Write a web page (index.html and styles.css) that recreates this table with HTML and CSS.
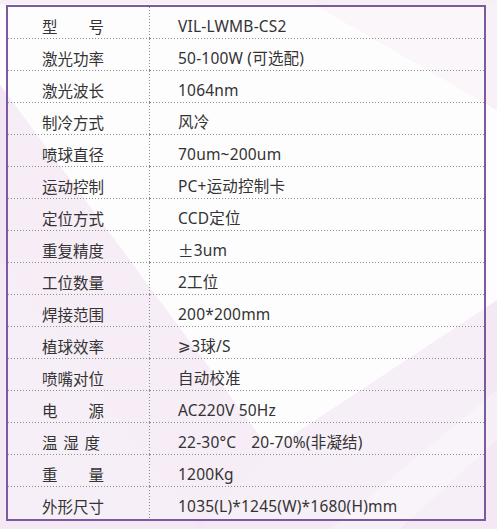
FILE: index.html
```html
<!DOCTYPE html>
<html lang="zh-CN">
<head>
<meta charset="utf-8">
<title>技术参数</title>
<link rel="stylesheet" href="styles.css">
</head>
<body>
<div class="page">
  <svg class="bg" width="497" height="529" viewBox="0 0 497 529" aria-hidden="true">
    <rect width="497" height="529" fill="#f4e8f4"/>
    <polygon points="0,0 307,0 497,110 497,300 270,450 0,85" fill="#fefcfe"/>
    <polygon points="307,0 497,0 497,110" fill="#f8f2f8"/>
    <polygon points="0,85 270,450 200,529 0,260" fill="#f3e5f3"/>
    <polygon points="330,529 497,390 497,440 400,529" fill="#f7eff7"/>
    <rect x="0" y="0" width="497" height="4" fill="#f6eff6"/>
  </svg>
  <div class="spec">
    <div class="k"><span class="just w4"><span>型</span><span>号</span></span></div><div class="v">VIL-LWMB-CS2</div>
    <div class="k">激光功率</div><div class="v">50-100W (可选配)</div>
    <div class="k">激光波长</div><div class="v">1064nm</div>
    <div class="k">制冷方式</div><div class="v">风冷</div>
    <div class="k">喷球直径</div><div class="v">70um~200um</div>
    <div class="k">运动控制</div><div class="v">PC+运动控制卡</div>
    <div class="k">定位方式</div><div class="v">CCD定位</div>
    <div class="k">重复精度</div><div class="v"><span class="cjk">±</span>3um</div>
    <div class="k">工位数量</div><div class="v">2工位</div>
    <div class="k">焊接范围</div><div class="v">200*200mm</div>
    <div class="k">植球效率</div><div class="v"><span class="ge">⩾</span>3球/S</div>
    <div class="k">喷嘴对位</div><div class="v">自动校准</div>
    <div class="k"><span class="just w4"><span>电</span><span>源</span></span></div><div class="v">AC220V 50Hz</div>
    <div class="k"><span class="just w3"><span>温</span><span>湿</span><span>度</span></span></div><div class="v">22-30°C<span class="gap"></span>20-70%(非凝结)</div>
    <div class="k"><span class="just w4"><span>重</span><span>量</span></span></div><div class="v">1200Kg</div>
    <div class="k last">外形尺寸</div><div class="v last">1035(L)*1245(W)*1680(H)mm</div>
  </div>
</div>
</body>
</html>
```

FILE: styles.css
```css
html, body {
  margin: 0;
  padding: 0;
}

body {
  width: 497px;
  height: 529px;
  overflow: hidden;
  font-family: "Noto Sans CJK SC", "Noto Sans", sans-serif;
  color: #333333;
}

.page {
  display: grid;
  width: 497px;
  height: 529px;
}

.bg {
  grid-area: 1 / 1;
  display: block;
}

.spec {
  grid-area: 1 / 1;
  align-self: start;
  margin: 5px 0 0 6px;
  width: 480px;
  box-sizing: border-box;
  border: 2px solid #7b5a9f;
  background: rgba(255, 255, 255, 0.3);
  display: grid;
  grid-template-columns: 142px 1fr;
  grid-auto-rows: 32px;
  font-size: 15.5px;
}

.k,
.v {
  display: flex;
  align-items: center;
  box-sizing: border-box;
  padding-top: 6px;
  line-height: 20px;
  white-space: nowrap;
  background-image: linear-gradient(to right, #8c8c8c 1px, transparent 1px);
  background-size: 3px 1px;
  background-repeat: repeat-x;
  background-position: left bottom;
}

.k {
  padding-left: 34px;
  background-image:
    linear-gradient(to right, #8c8c8c 1px, transparent 1px),
    linear-gradient(to bottom, #8c8c8c 1px, transparent 1px);
  background-size: 3px 1px, 1px 3px;
  background-repeat: repeat-x, repeat-y;
  background-position: left bottom, right top;
}

.v {
  padding-left: 28px;
  font-family: "Noto Sans", "Noto Sans CJK SC", sans-serif;
  letter-spacing: 0.2px;
  white-space: pre;
}

.k.last {
  background-image: linear-gradient(to bottom, #8c8c8c 1px, transparent 1px);
  background-size: 1px 3px;
  background-repeat: repeat-y;
  background-position: right top;
}

.v.last {
  background-image: none;
}

.just {
  display: flex;
  justify-content: space-between;
}

.w4 {
  width: 62px;
}

.w3 {
  width: 58px;
}

.gap {
  display: inline-block;
  width: 15px;
}

.cjk {
  font-family: "Noto Sans CJK SC", sans-serif;
}

.ge {
  font-family: "DejaVu Sans", sans-serif;
}
```
